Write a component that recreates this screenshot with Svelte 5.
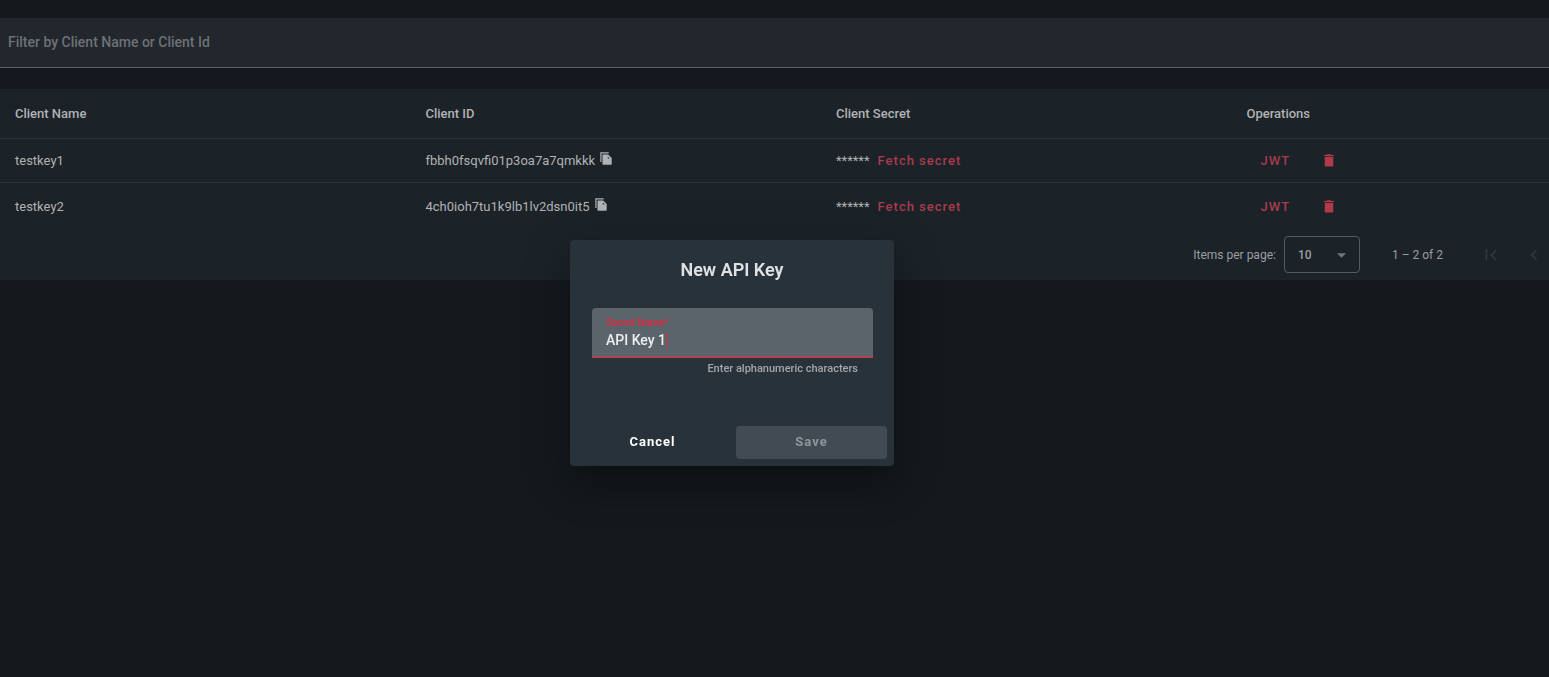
<script lang="ts">
  let filter = $state("");
  let secretName = $state("API Key 1");
  let pageSize = $state("10");

  const clients = [
    { name: "testkey1", id: "fbbh0fsqvfi01p3oa7a7qmkkk" },
    { name: "testkey2", id: "4ch0ioh7tu1k9lb1lv2dsn0it5" },
  ];

  const pageButtons = [
    { label: "First page", path: "M18.41 16.59L13.82 12l4.59-4.59L17 6l-6 6 6 6zM6 6h2v12H6z" },
    { label: "Previous page", path: "M15.41 7.41L14 6l-6 6 6 6 1.41-1.41L10.83 12z" },
    { label: "Next page", path: "M10 6L8.59 7.41 13.17 12l-4.58 4.59L10 18l6-6z" },
    { label: "Last page", path: "M5.59 7.41L10.18 12l-4.59 4.59L7 18l6-6-6-6zM16 6h2v12h-2z" },
  ];
</script>

<div class="viewport">
  <main class="page">
    <input class="filter" type="text" aria-label="Filter" placeholder="Filter by Client Name or Client Id" bind:value={filter} />

    <div class="panel">
      <table>
        <thead>
          <tr>
            <th>Client Name</th>
            <th>Client ID</th>
            <th>Client Secret</th>
            <th>Operations</th>
          </tr>
        </thead>
        <tbody>
          {#each clients as client}
            <tr>
              <td>{client.name}</td>
              <td>
                <div class="cell">
                  {client.id}
                  <button class="copy" aria-label="Copy client ID">
                    <svg viewBox="0 0 12 13">
                      <path d="M.9 10V.8h7.8" fill="none" stroke="currentColor" stroke-width="1.2" />
                      <path d="M3.3 2.5h4.8l3.6 3.6v5.8q0 .8-.8.8H3.3q-.8 0-.8-.8V3.3q0-.8.8-.8z" fill="currentColor" />
                      <path d="M7.8 4.6v1.8h1.8z" fill="#1b2228" />
                    </svg>
                  </button>
                </div>
              </td>
              <td>
                <div class="cell secret">
                  <span>******</span>
                  <button class="link">Fetch secret</button>
                </div>
              </td>
              <td>
                <div class="cell operations">
                  <button class="link">JWT</button>
                  <button class="trash" aria-label="Delete">
                    <svg viewBox="0 0 10 13">
                      <path d="M0 .9h2.5L3.2.3h3.6l.7.6H10v1H0zM.7 2.7h8.6v9q0 .8-.8.8h-7q-.8 0-.8-.8z" fill="currentColor" />
                    </svg>
                  </button>
                </div>
              </td>
            </tr>
          {/each}
        </tbody>
      </table>

      <div class="paginator">
        <label for="page-size">Items per page:</label>
        <div class="select">
          <select id="page-size" bind:value={pageSize}>
            <option>10</option>
            <option>20</option>
            <option>50</option>
          </select>
          <svg class="arrow" viewBox="0 0 10 5"><path d="M0 0h10L5 5z" fill="currentColor" /></svg>
        </div>
        <span class="range">1 – 2 of 2</span>
        {#each pageButtons as button}
          <button class="page-button" aria-label={button.label} disabled>
            <svg viewBox="0 0 24 24"><path d={button.path} fill="currentColor" /></svg>
          </button>
        {/each}
      </div>
    </div>
  </main>

  <div class="overlay">
    <div class="dialog" role="dialog" aria-modal="true" aria-labelledby="dialog-title">
      <h2 id="dialog-title">New API Key</h2>
      <div class="field">
        <label for="secret-name">Secret Name*</label>
        <div class="entry">
          <input id="secret-name" type="text" bind:value={secretName} />
          <span class="caret"></span>
        </div>
      </div>
      <p class="hint">Enter alphanumeric characters</p>
      <div class="actions">
        <button class="cancel">Cancel</button>
        <button class="save" disabled>Save</button>
      </div>
    </div>
  </div>
</div>

<style>
  :global(body) {
    background: #13191c;
  }
  .viewport {
    min-height: 100vh;
    overflow: hidden;
    font-family: Roboto, "Liberation Sans", sans-serif;
    font-size: 13px;
    color: #b0b3b4;
  }
  button, input, select {
    font: inherit;
    color: inherit;
    border: 0;
    padding: 0;
    background: none;
    outline: none;
  }
  svg {
    display: block;
  }
  /* the table is a little wider than the window */
  .page {
    width: 106%;
    padding-top: 18px;
  }
  .filter {
    display: block;
    box-sizing: border-box;
    width: 100%;
    height: 50px;
    padding: 0 8px 2px;
    background: #22262d;
    border-bottom: 1px solid #5d6164;
    font-size: 14px;
    font-weight: 500;
  }
  .filter::placeholder {
    color: #6d7175;
    opacity: 1;
  }
  .panel {
    margin-top: 21px;
    background: #1b2228;
  }
  table {
    width: 100%;
    table-layout: fixed;
    border-collapse: separate;
    border-spacing: 0;
  }
  th, td {
    box-sizing: border-box;
    height: 46px;
    padding: 0 15px;
    text-align: left;
    vertical-align: middle;
  }
  th {
    height: 50px;
    font-weight: 500;
    border-bottom: 1px solid #2b3238;
  }
  tbody tr:not(:last-child) td {
    height: 44px;
    border-bottom: 1px solid #2b3238;
  }
  .cell {
    display: flex;
    align-items: center;
  }
  .copy {
    margin: 0 0 4px 5px;
  }
  .copy svg {
    width: 12px;
    height: 13px;
  }
  .secret {
    gap: 8px;
  }
  .link {
    color: #a93b4c;
    font-weight: 500;
    letter-spacing: 1px;
  }
  .operations {
    padding-left: 14px;
    gap: 34px;
  }
  .trash {
    color: #b03a4b;
  }
  .trash svg {
    width: 10px;
    height: 13px;
  }
  .paginator {
    display: flex;
    align-items: center;
    justify-content: flex-end;
    height: 51px;
    font-size: 12px;
    color: #9a9ea2;
  }
  .select {
    position: relative;
    margin: 0 32px 0 8px;
  }
  .select select {
    appearance: none;
    display: block;
    box-sizing: border-box;
    width: 76px;
    height: 37px;
    padding: 0 13px;
    border: 1px solid #555b61;
    border-radius: 4px;
    font-weight: 500;
  }
  .arrow {
    position: absolute;
    right: 14px;
    top: 17px;
    width: 9px;
    height: 5px;
    color: #73787d;
    pointer-events: none;
  }
  .range {
    margin-right: 27px;
  }
  .page-button {
    display: flex;
    justify-content: center;
    width: 43px;
    color: #30373e;
  }
  .page-button svg {
    width: 22px;
    height: 22px;
  }
  .overlay {
    position: fixed;
    inset: 0;
    display: flex;
    align-items: flex-start;
    justify-content: center;
    padding: 240px 85px 0 0;
  }
  .dialog {
    box-sizing: border-box;
    width: 324px;
    padding: 16px 7px 7px;
    border-radius: 4px;
    background: #28323a;
    box-shadow: 0 11px 15px -7px rgba(0, 0, 0, 0.2), 0 24px 38px 3px rgba(0, 0, 0, 0.14), 0 9px 46px 8px rgba(0, 0, 0, 0.12);
  }
  h2 {
    margin: 0 0 24px;
    font-size: 18px;
    line-height: 28px;
    font-weight: 600;
    text-align: center;
    color: #dfe1e3;
  }
  .field {
    box-sizing: border-box;
    height: 50px;
    margin: 0 14px 0 15px;
    padding: 8px 14px 0;
    border-bottom: 2px solid #b3434e;
    border-radius: 4px 4px 0 0;
    background: #5c646b;
  }
  .field label {
    display: block;
    font-size: 10px;
    line-height: 14px;
    font-weight: 700;
    color: #cf2f43;
  }
  .entry {
    position: relative;
  }
  .entry input {
    display: block;
    width: 100%;
    height: 20px;
    font-size: 14px;
    font-weight: 500;
    color: #eceef0;
    caret-color: transparent;
  }
  .caret {
    position: absolute;
    left: 60px;
    top: 2px;
    width: 1px;
    height: 16px;
    background: #d32f43;
  }
  .hint {
    margin: 3px 29px 49px;
    font-size: 11px;
    line-height: 16px;
    font-weight: 500;
    text-align: right;
    color: #a3a8ac;
  }
  .actions {
    display: grid;
    grid-template-columns: 1fr 1fr;
    gap: 8px;
  }
  .actions button {
    height: 33px;
    padding-bottom: 2px;
    border-radius: 4px;
    font-weight: 700;
    letter-spacing: 1px;
  }
  .cancel {
    color: #ffffff;
  }
  .save {
    background: #424b53;
    color: #8f969c;
  }
</style>
